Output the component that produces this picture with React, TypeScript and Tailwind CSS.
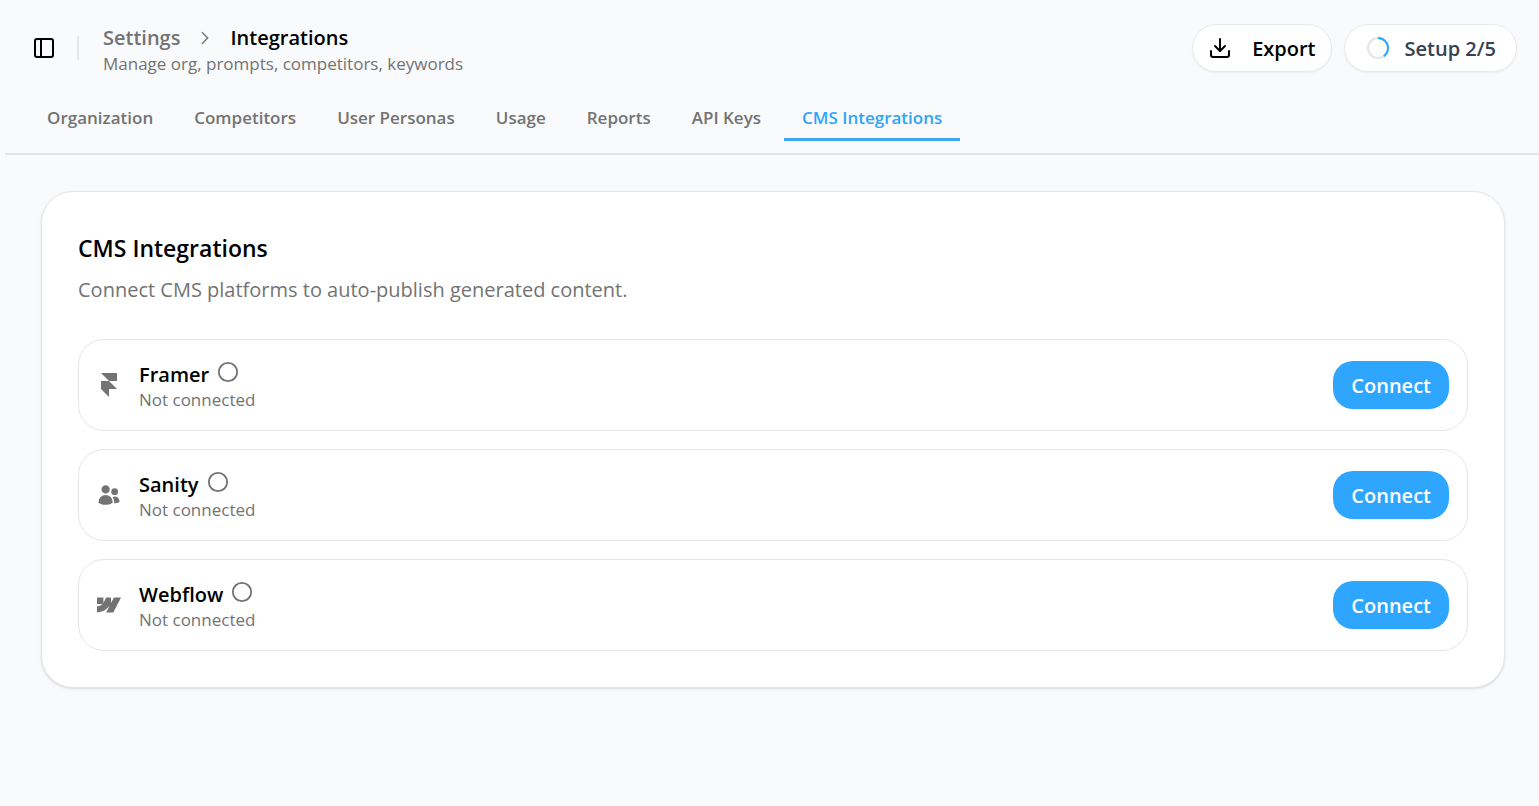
import React, { useState } from 'react';
import { ChevronRight, Circle, Download, PanelLeft } from 'lucide-react';
import { SiFramer, SiWebflow } from 'react-icons/si';
import { HiUsers } from 'react-icons/hi2';
import type { IconType } from 'react-icons';

type Integration = {
  id: string;
  name: string;
  icon: IconType;
};

const TABS = ['Organization', 'Competitors', 'User Personas', 'Usage', 'Reports', 'API Keys', 'CMS Integrations'];

const INTEGRATIONS: Integration[] = [
  { id: 'framer', name: 'Framer', icon: SiFramer },
  { id: 'sanity', name: 'Sanity', icon: HiUsers },
  { id: 'webflow', name: 'Webflow', icon: SiWebflow },
];

const SetupRing: React.FC<{ done: number; total: number }> = ({ done, total }) => (
  <svg width="22" height="22" viewBox="0 0 22 22" fill="none" strokeWidth="2" aria-hidden="true">
    <circle cx="11" cy="11" r="10" stroke="#e2e4e7" />
    <circle
      cx="11"
      cy="11"
      r="10"
      stroke="#2ea5fb"
      pathLength={total}
      strokeDasharray={`${done} ${total}`}
      transform="rotate(-90 11 11)"
    />
  </svg>
);

const Header: React.FC = () => (
  <header className="flex items-start justify-between pl-8 pr-[22px] pt-6">
    <div className="flex items-start">
      <div className="flex h-12 items-center">
        <button type="button" aria-label="Toggle sidebar" className="text-black">
          <PanelLeft size={24} />
        </button>
        <div className="ml-[21px] mr-6 h-6 w-0.5 bg-[#e4e6e9]" />
      </div>
      <div>
        <nav aria-label="Breadcrumb" className="flex h-7 items-center text-xl font-semibold">
          <a href="#settings" className="text-[#737373]">Settings</a>
          <ChevronRight size={22} strokeWidth={1.5} className="mx-3.5 text-[#737373]" />
          <span className="text-black">Integrations</span>
        </nav>
        <p className="text-[17px] leading-6 text-[#737373]">Manage org, prompts, competitors, keywords</p>
      </div>
    </div>
    <div className="flex gap-3 text-xl font-semibold">
      <button type="button" className="flex h-12 items-center gap-5 rounded-3xl border border-[#e8eaed] bg-white px-[15px] text-black shadow-xs">
        <Download size={24} />
        <span className="pt-0.5">Export</span>
      </button>
      <button type="button" className="flex h-12 items-center gap-4 rounded-3xl border border-[#e8eaed] bg-white pl-[22px] pr-5 text-gray-700 shadow-xs">
        <SetupRing done={2} total={5} />
        <span className="pt-0.5">Setup 2/5</span>
      </button>
    </div>
  </header>
);

export default function App() {
  const [activeTab, setActiveTab] = useState('CMS Integrations');

  return (
    <div className="min-h-screen bg-[#f9fafc] font-['Open_Sans',sans-serif]">
      <Header />

      {/* Tabs */}
      <div role="tablist" className="ml-[5px] mt-[18px] flex gap-[5px] border-b-2 border-[#e2e4e7] pb-3 pl-6">
        {TABS.map((tab) => (
          <button
            key={tab}
            type="button"
            role="tab"
            aria-selected={tab === activeTab}
            onClick={() => setActiveTab(tab)}
            className={`h-[47px] border-b-3 px-[18px] pt-1 text-[17px] font-semibold ${
              tab === activeTab ? 'border-[#3ea6ee] text-[#2ea5fb]' : 'border-transparent text-[#737373]'
            }`}
          >
            {tab}
          </button>
        ))}
      </div>

      <main className="pb-8 pl-[41px] pr-[34px] pt-9">
        <section className="rounded-[32px] border border-[#e4e6e9] bg-white p-9 shadow-sm">
          <h1 className="mt-1 text-[23px] leading-8 font-semibold text-black">CMS Integrations</h1>
          <p className="mt-2.5 text-xl leading-8 text-[#737373]">Connect CMS platforms to auto-publish generated content.</p>

          <ul className="mt-[33px] space-y-[18px]">
            {INTEGRATIONS.map(({ id, name, icon: Icon }) => (
              <li key={id} className="flex h-[92px] items-center justify-between rounded-[26px] border border-[#e4e6e9] px-[18px]">
                <div className="flex items-center gap-[18px]">
                  <Icon size={24} className="text-[#737373]" />
                  <div>
                    <div className="flex h-7 items-center gap-2">
                      <h2 className="pt-1.5 text-xl font-semibold text-black">{name}</h2>
                      <Circle size={22} className="text-[#737373]" />
                    </div>
                    <p className="mt-0.5 text-[17px] leading-6 text-[#737373]">Not connected</p>
                  </div>
                </div>
                <button type="button" className="h-12 rounded-[20px] bg-[#2ea5ff] px-[18px] pt-0.5 text-xl font-semibold text-white">
                  Connect
                </button>
              </li>
            ))}
          </ul>
        </section>
      </main>
    </div>
  );
}
